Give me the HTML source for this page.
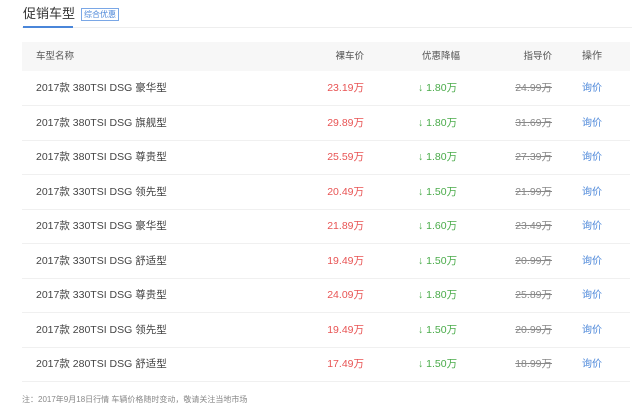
<!DOCTYPE html><html><head><meta charset="utf-8"><style>
body{margin:0;width:640px;height:413px;background:#fff;font-family:"Liberation Sans","Noto Sans CJK SC",sans-serif;position:relative;overflow:hidden}
.t{position:absolute;left:23px;top:5px;font-size:13px;line-height:18px;color:#333}
.tag{position:absolute;left:81px;top:8px;width:36px;height:11px;border:1px solid #7aa7e6;color:#4a86d9;font-size:8px;line-height:11px;text-align:center;white-space:nowrap;overflow:hidden}
.gl{position:absolute;left:22px;right:8px;top:27px;height:1px;background:#eee}
.bl{position:absolute;left:23px;width:50px;top:26px;height:2px;background:#4a86d9}
.r{position:absolute;left:22px;width:608px;height:34px;border-bottom:1px solid #f0f0f0;font-size:10.5px;line-height:34px;color:#444}
.r span{position:absolute;top:0}
.h{background:#f7f7f7;border:none;height:29px;line-height:29px;color:#555;font-size:9.5px}
.n{left:14px}.p{right:266px;color:#e85353}.d{left:396px;color:#4aab4a}.g{right:78px;color:#888;text-decoration:line-through}
.r span.o{left:560px;color:#4a86d9;font-size:10px;top:1px}
.h .p,.h .g{color:#555}.h .d{left:400px;color:#555}.h span.o{color:#555;top:0}
.note{position:absolute;left:22px;top:394px;font-size:8px;color:#888}
</style></head><body>
<div class="t">促销车型</div><div class="tag">综合优惠</div><div class="gl"></div><div class="bl"></div>
<div class="r h" style="top:42px"><span class="n">车型名称</span><span class="p">裸车价</span><span class="d">优惠降幅</span><span class="g" style="text-decoration:none">指导价</span><span class="o">操作</span></div>
<div class="r" style="top:71px"><span class="n">2017款 380TSI DSG 豪华型</span><span class="p">23.19万</span><span class="d">↓ 1.80万</span><span class="g">24.99万</span><span class="o">询价</span></div>
<div class="r" style="top:105.5px"><span class="n">2017款 380TSI DSG 旗舰型</span><span class="p">29.89万</span><span class="d">↓ 1.80万</span><span class="g">31.69万</span><span class="o">询价</span></div>
<div class="r" style="top:140px"><span class="n">2017款 380TSI DSG 尊贵型</span><span class="p">25.59万</span><span class="d">↓ 1.80万</span><span class="g">27.39万</span><span class="o">询价</span></div>
<div class="r" style="top:174.5px"><span class="n">2017款 330TSI DSG 领先型</span><span class="p">20.49万</span><span class="d">↓ 1.50万</span><span class="g">21.99万</span><span class="o">询价</span></div>
<div class="r" style="top:209px"><span class="n">2017款 330TSI DSG 豪华型</span><span class="p">21.89万</span><span class="d">↓ 1.60万</span><span class="g">23.49万</span><span class="o">询价</span></div>
<div class="r" style="top:243.5px"><span class="n">2017款 330TSI DSG 舒适型</span><span class="p">19.49万</span><span class="d">↓ 1.50万</span><span class="g">20.99万</span><span class="o">询价</span></div>
<div class="r" style="top:278px"><span class="n">2017款 330TSI DSG 尊贵型</span><span class="p">24.09万</span><span class="d">↓ 1.80万</span><span class="g">25.89万</span><span class="o">询价</span></div>
<div class="r" style="top:312.5px"><span class="n">2017款 280TSI DSG 领先型</span><span class="p">19.49万</span><span class="d">↓ 1.50万</span><span class="g">20.99万</span><span class="o">询价</span></div>
<div class="r" style="top:347px"><span class="n">2017款 280TSI DSG 舒适型</span><span class="p">17.49万</span><span class="d">↓ 1.50万</span><span class="g">18.99万</span><span class="o">询价</span></div>
<div class="note">注：2017年9月18日行情 车辆价格随时变动，敬请关注当地市场</div>
</body></html>
